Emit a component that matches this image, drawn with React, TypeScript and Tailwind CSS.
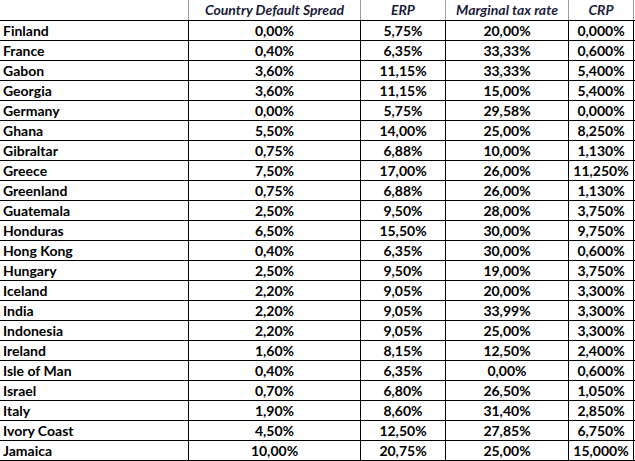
const rows: [string, string, string, string, string][] = [
  ["Finland", "0,00%", "5,75%", "20,00%", "0,000%"],
  ["France", "0,40%", "6,35%", "33,33%", "0,600%"],
  ["Gabon", "3,60%", "11,15%", "33,33%", "5,400%"],
  ["Georgia", "3,60%", "11,15%", "15,00%", "5,400%"],
  ["Germany", "0,00%", "5,75%", "29,58%", "0,000%"],
  ["Ghana", "5,50%", "14,00%", "25,00%", "8,250%"],
  ["Gibraltar", "0,75%", "6,88%", "10,00%", "1,130%"],
  ["Greece", "7,50%", "17,00%", "26,00%", "11,250%"],
  ["Greenland", "0,75%", "6,88%", "26,00%", "1,130%"],
  ["Guatemala", "2,50%", "9,50%", "28,00%", "3,750%"],
  ["Honduras", "6,50%", "15,50%", "30,00%", "9,750%"],
  ["Hong Kong", "0,40%", "6,35%", "30,00%", "0,600%"],
  ["Hungary", "2,50%", "9,50%", "19,00%", "3,750%"],
  ["Iceland", "2,20%", "9,05%", "20,00%", "3,300%"],
  ["India", "2,20%", "9,05%", "33,99%", "3,300%"],
  ["Indonesia", "2,20%", "9,05%", "25,00%", "3,300%"],
  ["Ireland", "1,60%", "8,15%", "12,50%", "2,400%"],
  ["Isle of Man", "0,40%", "6,35%", "0,00%", "0,600%"],
  ["Israel", "0,70%", "6,80%", "26,50%", "1,050%"],
  ["Italy", "1,90%", "8,60%", "31,40%", "2,850%"],
  ["Ivory Coast", "4,50%", "12,50%", "27,85%", "6,750%"],
  ["Jamaica", "10,00%", "20,75%", "25,00%", "15,000%"],
];

// column widths taken from the sheet: 188 / 172 / 85 / 123 / 66
const cols = "grid grid-cols-[188px_172px_85px_123px_66px]";

export default function App() {
  return (
    <div
      className="w-[635px] bg-white text-[14px] font-bold leading-none text-black"
      style={{ fontFamily: "Lato, 'Liberation Sans', sans-serif" }}
    >
      {/* Header */}
      <div className={`${cols} h-[21px] border-b border-black italic text-[#1c1c3a]`}>
        <div />
        <div className="flex items-center justify-center border-l border-[#9e9e9e]">
          Country Default Spread
        </div>
        <div className="flex items-center justify-center border-l border-[#9e9e9e]">ERP</div>
        <div className="flex items-center justify-center border-l border-[#9e9e9e]">
          Marginal tax rate
        </div>
        <div className="flex items-center justify-center border-x border-[#9e9e9e]">CRP</div>
      </div>

      {/* Rows */}
      {rows.map(([country, spread, erp, tax, crp]) => (
        <div key={country} className={`${cols} h-[20px] border-b border-black`}>
          <div className="flex items-center pl-[3px]">{country}</div>
          <div className="flex items-center justify-center border-l border-black">{spread}</div>
          <div className="flex items-center justify-center border-l border-black">{erp}</div>
          <div className="flex items-center justify-center border-l border-black">{tax}</div>
          <div className="flex items-center justify-center border-x border-black">{crp}</div>
        </div>
      ))}
    </div>
  );
}
